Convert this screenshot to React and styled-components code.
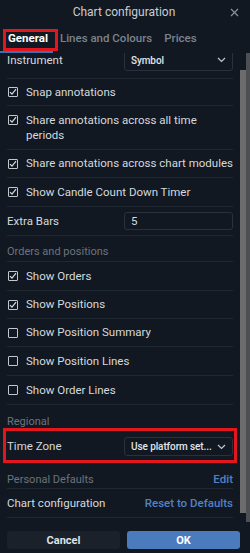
import React from "react";
import styled, { createGlobalStyle, css } from "styled-components";

const Global = createGlobalStyle`
  html, body { margin: 0; padding: 0; background: #111821; }
  body { font-family: Roboto, "Liberation Sans", Arial, sans-serif; }
  * { box-sizing: border-box; }
`;

const Dialog = styled.div`
  width: 250px;
  height: 553px;
  background: #111821;
  display: flex;
  flex-direction: column;
  overflow: hidden;
  color: #d3d6da;
  font-size: 11.5px;
`;

const Header = styled.div`
  flex: none;
  height: 24px;
  display: flex;
  align-items: center;
  justify-content: center;
  position: relative;
  padding-right: 2px;
`;

const Title = styled.div`
  font-size: 12px;
  color: #c9ccd1;
`;

const Close = styled.div`
  position: absolute;
  right: 11px;
  top: 8px;
  width: 9px;
  height: 9px;
  display: flex;
`;

const Tabs = styled.div`
  flex: none;
  height: 29px;
  display: flex;
  align-items: stretch;
`;

const Tab = styled.div`
  padding: 0 5px 0 7px;
  display: flex;
  align-items: center;
  white-space: nowrap;
  font-size: 11.5px;
  font-weight: ${(p) => (p.$active ? 700 : 500)};
  color: ${(p) => (p.$active ? "#ffffff" : "#7c838d")};
  border-bottom: 2px solid ${(p) => (p.$active ? "#3d6fb4" : "transparent")};
`;

const HighlightTab = styled(Tab)`
  padding-left: 8px;
  position: relative;
  &::after {
    content: "";
    position: absolute;
    left: 3px;
    right: -5px;
    top: 5px;
    bottom: 0px;
    border: 3px solid #e3151d;
  }
`;

const Body = styled.div`
  flex: 1;
  display: flex;
  min-height: 0;
`;

const Scroll = styled.div`
  flex: 1;
  overflow: hidden;
  padding: 0 7px;
`;

const Content = styled.div`
  margin-top: -11px;
`;

const ScrollTrack = styled.div`
  flex: none;
  width: 6px;
  display: flex;
  flex-direction: column;
  background: #111821;
`;

const Thumb = styled.div`
  margin-top: 17px;
  height: 443px;
  background: #6c6c6c;
`;

const Strip = styled.div`
  flex: none;
  width: 4px;
  background: #4d4f52;
`;

const Row = styled.div`
  display: flex;
  align-items: center;
  justify-content: space-between;
  height: ${(p) => p.$h || 29}px;
  border-bottom: ${(p) => (p.$noline ? "none" : "1px solid #1f2731")};
  line-height: 15px;
  ${(p) =>
    p.$highlight &&
    css`
      position: relative;
      &::after {
        content: "";
        position: absolute;
        left: -4px;
        right: -4px;
        top: -3px;
        bottom: -1px;
        border: 3px solid #e3151d;
      }
    `}
`;

const Label = styled.span`
  color: #d6d9dd;
  white-space: nowrap;
`;

const Section = styled.div`
  display: flex;
  justify-content: space-between;
  align-items: flex-end;
  height: ${(p) => p.$h || 26}px;
  padding-bottom: ${(p) => p.$pb ?? 3}px;
  border-bottom: ${(p) => (p.$noline ? "none" : "1px solid #1f2731")};
  color: #6c737d;
  font-size: 11px;
  line-height: 13px;
`;

const Link = styled.span`
  color: #5282c6;
  font-weight: 500;
  font-size: 11.5px;
  white-space: nowrap;
`;

const Check = styled.label`
  display: flex;
  align-items: flex-start;
  gap: 8px;
  color: #d6d9dd;
`;

const Box = styled.span`
  flex: none;
  width: 10px;
  height: 10px;
  margin: 2.5px 0 0 1px;
  border: 1px solid #c3c7cc;
  border-radius: 1px;
  display: flex;
  align-items: center;
  justify-content: center;
`;

const Wrap = styled.span`
  display: block;
`;

const Select = styled.div`
  flex: none;
  width: 109px;
  height: ${(p) => p.$h || 19}px;
  border: 1px solid #29313c;
  border-radius: 3px;
  display: flex;
  align-items: center;
  justify-content: space-between;
  gap: 3px;
  padding: 0 6px 0 6px;
  color: #e2e5e8;
  font-weight: 500;
  font-size: 10px;
  letter-spacing: -0.1px;
  white-space: nowrap;
`;

const SelectValue = styled.span`
  overflow: hidden;
  min-width: 0;
`;

const Input = styled.div`
  flex: none;
  width: 109px;
  height: 18px;
  border: 1px solid #29313c;
  border-radius: 3px;
  display: flex;
  align-items: center;
  padding: 0 6px;
  color: #d6d9dd;
`;

const Footer = styled.div`
  flex: none;
  height: 31px;
  display: flex;
  gap: 7px;
  padding: 9px 10px 4px 7px;
`;

const Button = styled.div`
  flex: 1;
  border-radius: 3px;
  display: flex;
  align-items: center;
  justify-content: center;
  font-weight: 700;
  font-size: 11px;
  background: ${(p) => (p.$primary ? "#4a7bbd" : "#1a212b")};
  color: ${(p) => (p.$primary ? "#ffffff" : "#dfe2e6")};
`;

const Chevron = () => (
  <svg width="9" height="6" viewBox="0 0 9 6" style={{ flex: "none" }}>
    <path d="M1 1l3.5 3.5L8 1" stroke="#c4c8ce" strokeWidth="1.2" fill="none" />
  </svg>
);

const Tick = () => (
  <svg width="8" height="8" viewBox="0 0 8 8">
    <path d="M1 4.2l2 2L7 1.2" stroke="#d8dbe0" strokeWidth="1.2" fill="none" />
  </svg>
);

const CheckItem = ({ checked, children }) => (
  <Check>
    <Box>{checked && <Tick />}</Box>
    <Wrap>{children}</Wrap>
  </Check>
);

export default function App() {
  return (
    <>
      <Global />
      <Dialog>
        <Header>
          <Title>Chart configuration</Title>
          <Close>
            <svg width="9" height="9" viewBox="0 0 9 9">
              <path d="M1 1l7 7M8 1L1 8" stroke="#8b9098" strokeWidth="1.2" />
            </svg>
          </Close>
        </Header>
        <Tabs>
          <HighlightTab $active>General</HighlightTab>
          <Tab>Lines and Colours</Tab>
          <Tab>Prices</Tab>
        </Tabs>
        <Body>
          <Scroll>
            <Content>
              <Row $h={37}>
                <Label>Instrument</Label>
                <Select $h={21}>
                  <SelectValue>Symbol</SelectValue>
                  <Chevron />
                </Select>
              </Row>
              <Row $h={27}>
                <CheckItem checked>Snap annotations</CheckItem>
              </Row>
              <Row $h={44}>
                <CheckItem checked>Share annotations across all time periods</CheckItem>
              </Row>
              <Row $h={28}>
                <CheckItem checked>Share annotations across chart modules</CheckItem>
              </Row>
              <Row>
                <CheckItem checked>Show Candle Count Down Timer</CheckItem>
              </Row>
              <Row>
                <Label>Extra Bars</Label>
                <Input>5</Input>
              </Row>
              <Section>Orders and positions</Section>
              <Row>
                <CheckItem checked>Show Orders</CheckItem>
              </Row>
              <Row $h={28}>
                <CheckItem checked>Show Positions</CheckItem>
              </Row>
              <Row $h={28}>
                <CheckItem>Show Position Summary</CheckItem>
              </Row>
              <Row>
                <CheckItem>Show Position Lines</CheckItem>
              </Row>
              <Row>
                <CheckItem>Show Order Lines</CheckItem>
              </Row>
              <Section $noline>Regional</Section>
              <Row $h={31} $noline $highlight>
                <Label>Time Zone</Label>
                <Select>
                  <SelectValue>Use platform set...</SelectValue>
                  <Chevron />
                </Select>
              </Row>
              <Section $h={27} $pb={2}>
                Personal Defaults <Link>Edit</Link>
              </Section>
              <Row>
                <Label>Chart configuration</Label>
                <Link>Reset to Defaults</Link>
              </Row>
            </Content>
          </Scroll>
          <ScrollTrack>
            <Thumb />
          </ScrollTrack>
          <Strip />
        </Body>
        <Footer>
          <Button>Cancel</Button>
          <Button $primary>OK</Button>
        </Footer>
      </Dialog>
    </>
  );
}
